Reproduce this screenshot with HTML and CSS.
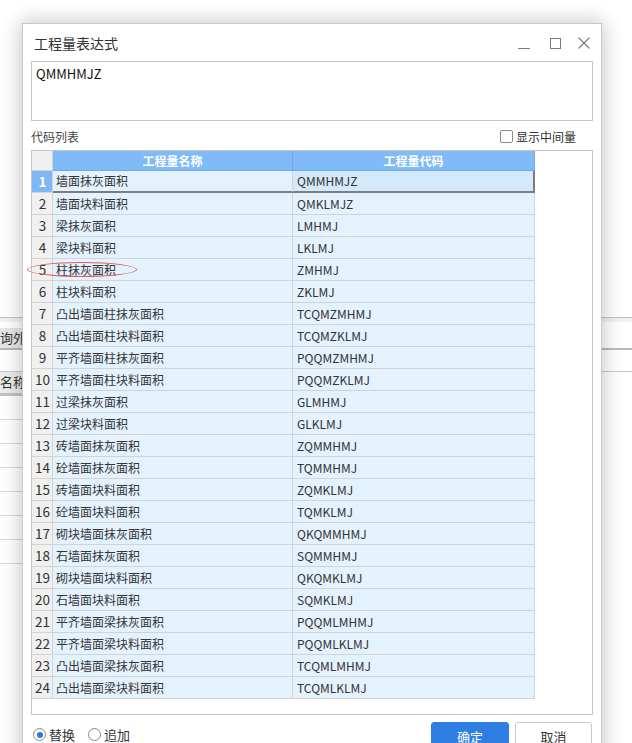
FILE: index.html
```html
<!DOCTYPE html>
<html lang="zh">
<head>
<meta charset="utf-8">
<title>工程量表达式</title>
<link rel="stylesheet" href="styles.css">
</head>
<body>
<div class="page">
  <div class="bg">
    <div class="bg-rule"></div>
    <div class="bg-toolbar"><span class="bg-tab">询外</span></div>
    <div class="bg-gap"></div>
    <div class="bg-head"><span class="bg-hcell">名称</span></div>
    <div class="bg-row"></div><div class="bg-row"></div><div class="bg-row"></div><div class="bg-row"></div>
    <div class="bg-row"></div><div class="bg-row"></div><div class="bg-row"></div>
  </div>

  <div class="dialog">
    <div class="titlebar">
      <span class="title">工程量表达式</span>
      <div class="winctl">
        <svg class="ic-min" width="12" height="12" viewBox="0 0 12 12"><line x1="0" y1="11.5" x2="12" y2="11.5" stroke="#7a7a7a" stroke-width="1"/></svg>
        <svg class="ic-max" width="11" height="11" viewBox="0 0 11 11"><rect x="0.5" y="0.5" width="10" height="10" fill="none" stroke="#7a7a7a" stroke-width="1"/></svg>
        <svg class="ic-close" width="12" height="12" viewBox="0 0 12 12"><path d="M0.5 0.5 L11.5 11.5 M11.5 0.5 L0.5 11.5" stroke="#7a7a7a" stroke-width="1.1" fill="none"/></svg>
      </div>
    </div>

    <div class="expr">QMMHMJZ</div>

    <div class="listbar">
      <span class="listlabel">代码列表</span>
      <label class="chk"><span class="chkbox"></span><span>显示中间量</span></label>
    </div>

    <div class="frame">
      <div class="grid">
        <div class="c num hd corner"></div>
        <div class="c hd">工程量名称</div>
        <div class="c hd hd-last">工程量代码</div>

        <div class="c num sel">1</div><div class="c name cur">墙面抹灰面积</div><div class="c code cur curcode">QMMHMJZ</div>
        <div class="c num">2</div><div class="c name">墙面块料面积</div><div class="c code">QMKLMJZ</div>
        <div class="c num">3</div><div class="c name">梁抹灰面积</div><div class="c code">LMHMJ</div>
        <div class="c num">4</div><div class="c name">梁块料面积</div><div class="c code">LKLMJ</div>
        <div class="c num">5</div><div class="c name">柱抹灰面积</div><div class="c code">ZMHMJ</div>
        <div class="c num">6</div><div class="c name">柱块料面积</div><div class="c code">ZKLMJ</div>
        <div class="c num">7</div><div class="c name">凸出墙面柱抹灰面积</div><div class="c code">TCQMZMHMJ</div>
        <div class="c num">8</div><div class="c name">凸出墙面柱块料面积</div><div class="c code">TCQMZKLMJ</div>
        <div class="c num">9</div><div class="c name">平齐墙面柱抹灰面积</div><div class="c code">PQQMZMHMJ</div>
        <div class="c num">10</div><div class="c name">平齐墙面柱块料面积</div><div class="c code">PQQMZKLMJ</div>
        <div class="c num">11</div><div class="c name">过梁抹灰面积</div><div class="c code">GLMHMJ</div>
        <div class="c num">12</div><div class="c name">过梁块料面积</div><div class="c code">GLKLMJ</div>
        <div class="c num">13</div><div class="c name">砖墙面抹灰面积</div><div class="c code">ZQMMHMJ</div>
        <div class="c num">14</div><div class="c name">砼墙面抹灰面积</div><div class="c code">TQMMHMJ</div>
        <div class="c num">15</div><div class="c name">砖墙面块料面积</div><div class="c code">ZQMKLMJ</div>
        <div class="c num">16</div><div class="c name">砼墙面块料面积</div><div class="c code">TQMKLMJ</div>
        <div class="c num">17</div><div class="c name">砌块墙面抹灰面积</div><div class="c code">QKQMMHMJ</div>
        <div class="c num">18</div><div class="c name">石墙面抹灰面积</div><div class="c code">SQMMHMJ</div>
        <div class="c num">19</div><div class="c name">砌块墙面块料面积</div><div class="c code">QKQMKLMJ</div>
        <div class="c num">20</div><div class="c name">石墙面块料面积</div><div class="c code">SQMKLMJ</div>
        <div class="c num">21</div><div class="c name">平齐墙面梁抹灰面积</div><div class="c code">PQQMLMHMJ</div>
        <div class="c num">22</div><div class="c name">平齐墙面梁块料面积</div><div class="c code">PQQMLKLMJ</div>
        <div class="c num">23</div><div class="c name">凸出墙面梁抹灰面积</div><div class="c code">TCQMLMHMJ</div>
        <div class="c num">24</div><div class="c name">凸出墙面梁块料面积</div><div class="c code">TCQMLKLMJ</div>
      </div>
    </div>

    <div class="footer">
      <div class="radios">
        <label class="radio"><span class="rcircle on"></span><span>替换</span></label>
        <label class="radio"><span class="rcircle"></span><span>追加</span></label>
      </div>
      <div class="buttons">
        <button class="btn primary">确定</button>
        <button class="btn">取消</button>
      </div>
    </div>
  </div>

  <div class="mark"></div>
</div>
</body>
</html>
```

FILE: styles.css
```css
* { box-sizing: border-box; }

html, body {
  margin: 0;
  padding: 0;
  width: 632px;
  height: 743px;
  overflow: hidden;
  background: #fff;
  font-family: "Noto Sans CJK SC", "Microsoft YaHei", "Noto Sans", sans-serif;
  color: #333;
}

.page {
  position: relative;
  width: 632px;
  height: 743px;
  overflow: hidden;
}

/* background window (partly hidden) */
.bg { padding-top: 317px; }
.bg-rule {
  height: 5px;
  border-top: 1px solid #c2c2c2;
  background: #f1f1f1;
}
.bg-toolbar {
  margin-top: 6px;
  height: 22px;
  border-bottom: 2px solid #b7bbc0;
  display: flex;
}
.bg-tab {
  background: #e7e7e7;
  width: 80px;
  font-size: 13px;
  line-height: 19px;
  color: #333;
}
.bg-gap {
  height: 22px;
  border-bottom: 1px solid #c7c7c7;
}
.bg-head {
  height: 24px;
  display: flex;
}
.bg-hcell {
  width: 80px;
  background: #ececec;
  border-bottom: 3px solid #c3c3c3;
  font-size: 13px;
  line-height: 20px;
  color: #333;
}
.bg-row {
  width: 300px;
  height: 24px;
  border-bottom: 1px solid #d9d9d9;
}

/* dialog */
.dialog {
  position: absolute;
  left: 22px;
  top: 23px;
  width: 580px;
  height: 760px;
  background: #fff;
  border: 1px solid #cacaca;
  box-shadow: 0 0 18px 2px rgba(0, 0, 0, 0.22);
  padding: 0 8px;
}

.titlebar {
  height: 37px;
  display: flex;
  align-items: center;
}
.title {
  font-size: 14px;
  color: #333;
  padding-left: 3px;
}
.winctl {
  margin-left: auto;
  display: flex;
  align-items: center;
  padding-right: 3px;
  padding-top: 1px;
}
.winctl svg { display: block; }
.ic-min { margin-right: 20px; }
.ic-max { margin-right: 17px; }

.expr {
  height: 60px;
  border: 1px solid #c6c6c6;
  padding: 3px 4px;
  font-size: 13px;
  line-height: 18px;
  color: #111;
}

.listbar {
  height: 29px;
  display: flex;
  align-items: center;
  justify-content: space-between;
  font-size: 12px;
  color: #444;
}
.listlabel { padding-top: 1px; }
.chk {
  display: flex;
  align-items: center;
  gap: 3px;
  padding-right: 17px;
  padding-top: 1px;
  color: #333;
}
.chkbox {
  width: 13px;
  height: 13px;
  border: 1px solid #8a8a8a;
  border-radius: 2px;
  background: #fff;
}

.frame {
  height: 565px;
  border: 1px solid #c6c6c6;
}

.grid {
  display: grid;
  grid-template-columns: 21px 240px 242px;
  grid-template-rows: 20px;
  grid-auto-rows: 22px;
  width: 503px;
}

.c {
  border-right: 1px solid #d3d3d3;
  border-bottom: 1px solid #d3d3d3;
  background: #e4f2fe;
  font-size: 12px;
  line-height: 21px;
  color: #333;
  white-space: nowrap;
  overflow: hidden;
}
.hd {
  background: #80bbf7;
  color: #fff;
  font-weight: 700;
  text-align: center;
  line-height: 19px;
  border-right-color: #6eaaea;
  border-bottom-color: #6eaaea;
}
.hd.corner {
  background: #f0f0f0;
  border-right-color: #d3d3d3;
  border-bottom-color: #d3d3d3;
}
.num {
  background: #f0f0f0;
  text-align: center;
  font-size: 13.5px;
  color: #333;
  padding-left: 1px;
}
.num.sel {
  background: #7db8f5;
  color: #fff;
  font-weight: 700;
}
.name { padding-left: 3px; }
.code { padding-left: 4px; }
.cur {
  border-bottom: 2px solid #7d7d7d;
  line-height: 20px;
}
.curcode {
  background: #d5e9fc;
  border-right: 2px solid #7d7d7d;
}

.footer {
  display: flex;
  justify-content: space-between;
  align-items: flex-start;
  padding-top: 7px;
}
.radios {
  display: flex;
  align-items: center;
  margin-top: 3px;
  padding-left: 2px;
  font-size: 13px;
  line-height: 19px;
  color: #333;
  gap: 13px;
}
.radio {
  display: flex;
  align-items: center;
  gap: 3px;
}
.rcircle {
  width: 13px;
  height: 13px;
  border: 1px solid #8a8a8a;
  border-radius: 50%;
  background: #fff;
  display: flex;
  align-items: center;
  justify-content: center;
}
.rcircle.on::after {
  content: "";
  width: 6px;
  height: 6px;
  border-radius: 50%;
  background: #2b79e0;
}

.buttons {
  display: flex;
  gap: 6px;
  margin-right: 1px;
}
.btn {
  width: 77px;
  height: 28px;
  border: 1px solid #c9c9c9;
  border-radius: 3px;
  background: #fff;
  font-family: inherit;
  font-size: 13px;
  color: #333;
  padding: 0;
}
.btn.primary {
  width: 78px;
  background: #2e7fe1;
  border-color: #2e7fe1;
  color: #fff;
}

/* red annotation ellipse over row 5 */
.mark {
  position: absolute;
  left: 27px;
  top: 262px;
  width: 110px;
  height: 15px;
  border: 1px solid #e25b5b;
  border-radius: 50%;
}
```
